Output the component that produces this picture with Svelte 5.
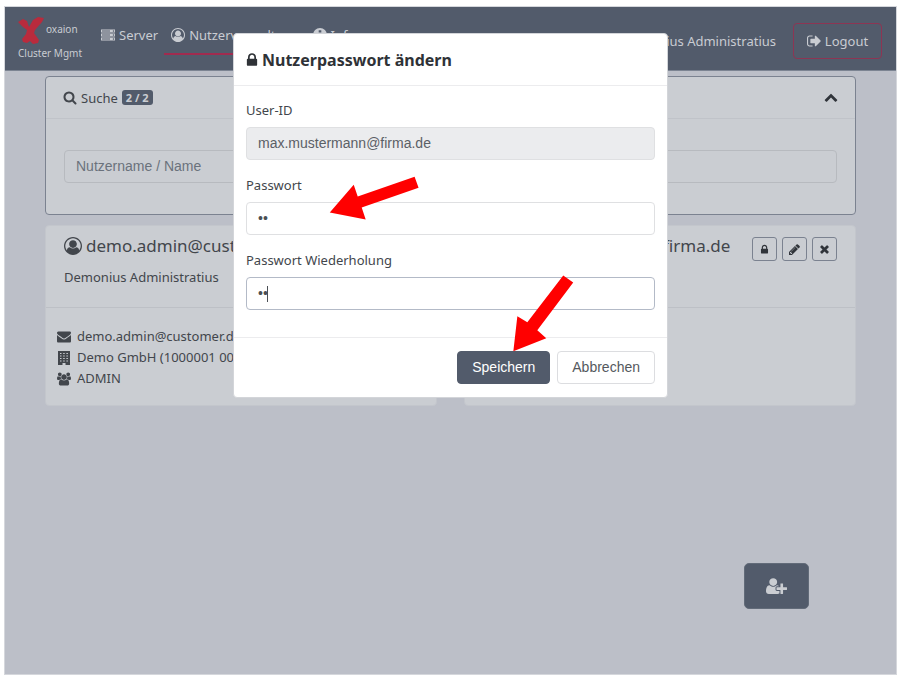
<script lang="ts">
	type Icon = { box: string; d: string };

	const icons: Record<string, Icon> = {
		lock: {
			box: '320 0 1152 1792',
			d: 'M640 768h512v-192q0-106-75-181t-181-75-181 75-75 181v192zm832 96v576q0 40-28 68t-68 28h-960q-40 0-68-28t-28-68v-576q0-40 28-68t68-28h32v-192q0-184 132-316t316-132 316 132 132 316v192h32q40 0 68 28t28 68z'
		},
		search: {
			box: '64 64 1664 1792',
			d: 'M1216 832q0-185-131.5-316.5t-316.5-131.5-316.5 131.5-131.5 316.5 131.5 316.5 316.5 131.5 316.5-131.5 131.5-316.5zm512 832q0 52-38 90t-90 38q-54 0-90-38l-343-342q-179 124-399 124-143 0-273.5-55.5t-225-150-150-225-55.5-273.5 55.5-273.5 150-225 225-150 273.5-55.5 273.5 55.5 225 150 150 225 55.5 273.5q0 220-124 399l343 343q37 37 37 90z'
		},
		user: {
			box: '0 0 1792 1792',
			d: 'M896 0q182 0 348 71t286 191 191 286 71 348q0 181-70.5 347t-190.5 286-286 191.5-349 71.5-349-71-285.5-191.5-190.5-286-71-347.5 71-348 191-286 286-191 348-71zm619 1351q149-205 149-455 0-156-61-298t-164-245-245-164-298-61-298 61-245 164-164 245-61 298q0 250 149 455 66-327 306-327 131 128 313 128t313-128q240 0 306 327zm-235-647q0-159-112.5-271.5t-271.5-112.5-271.5 112.5-112.5 271.5 112.5 271.5 271.5 112.5 271.5-112.5 112.5-271.5z'
		},
		server: {
			box: '0 0 1792 1664',
			d: 'M128 1408h1024v-128h-1024v128zm0-512h1024v-128h-1024v128zm1568 448q0-40-28-68t-68-28-68 28-28 68 28 68 68 28 68-28 28-68zm-1568-960h1024v-128h-1024v128zm1568 448q0-40-28-68t-68-28-68 28-28 68 28 68 68 28 68-28 28-68zm0-512q0-40-28-68t-68-28-68 28-28 68 28 68 68 28 68-28 28-68zm96 832v384h-1792v-384h1792zm0-512v384h-1792v-384h1792zm0-512v384h-1792v-384h1792z'
		},
		info: {
			box: '0 0 16 16',
			d: 'M8 0a8 8 0 1 1 0 16A8 8 0 0 1 8 0zM6.500 2.500v2.500h3V2.500zM5.500 6.500v1.500h1v4h-1v1.500h5V12h-1V6.500z'
		},
		signOut: {
			box: '64 128 1600 1536',
			d: 'M704 1440q0 4 1 20t.5 26.500-3 23.500-10 19.500-20.500 6.500h-320q-119 0-203.500-84.500t-84.500-203.500v-704q0-119 84.500-203.500t203.500-84.500h320q13 0 22.500 9.500t9.500 22.500q0 4 1 20t.5 26.500-3 23.500-10 19.500-20.500 6.500h-320q-66 0-113 47t-47 113v704q0 66 47 113t113 47h312l11.500 1 11.500 3 8 5.500 7 9 2 13.500zm928-544q0 26-19 45l-544 544q-19 19-45 19t-45-19-19-45v-288h-448q-26 0-45-19t-19-45v-384q0-26 19-45t45-19h448v-288q0-26 19-45t45-19 45 19l544 544q19 19 19 45z'
		},
		chevronUp: {
			box: '0 128 1792 1792',
			d: 'M1683 1331l-166 165q-19 19-45 19t-45-19l-531-531-531 531q-19 19-45 19t-45-19l-166-165q-19-19-19-45.500t19-45.500l742-741q19-19 45-19t45 19l742 741q19 19 19 45.500t-19 45.500z'
		},
		pencil: {
			box: '128 128 1536 1536',
			d: 'M491 1536l91-91-235-235-91 91v107h128v128h107zm523-928q0-22-22-22-10 0-17 7l-542 542q-7 7-7 17 0 22 22 22 10 0 17-7l542-542q7-7 7-17zm-54-192l416 416-832 832h-416v-416zm683 96q0 53-37 90l-166 166-416-416 166-165q36-38 90-38 53 0 91 38l235 234q37 39 37 91z'
		},
		times: {
			box: '192 192 1408 1536',
			d: 'M1490 1322q0 40-28 68l-136 136q-28 28-68 28t-68-28l-294-294-294 294q-28 28-68 28t-68-28l-136-136q-28-28-28-68t28-68l294-294-294-294q-28-28-28-68t28-68l136-136q28-28 68-28t68 28l294 294 294-294q28-28 68-28t68 28l136 136q28 28 28 68t-28 68l-294 294 294 294q28 28 28 68z'
		},
		envelope: {
			box: '0 128 1792 1664',
			d: 'M1792 710v794q0 66-47 113t-113 47h-1472q-66 0-113-47t-47-113v-794q44 49 101 87 362 246 497 345 57 42 92.500 65.500t94.500 48 110 24.500h2q51 0 110-24.500t94.500-48 92.500-65.500q170-123 498-345 57-39 100-87zm0-294q0 79-49 151t-122 123q-376 261-468 325-10 7-42.500 31t-54 38.500-52 32.500-57.500 27-50 9h-2q-23 0-50-9t-57.500-27-52-32.500-54-38.500-42.500-31q-91-64-262-182.500t-205-142.500q-62-42-117-115.500t-55-136.500q0-78 41.500-130t118.500-52h1472q65 0 112.500 47t47.500 113z'
		},
		building: {
			box: '0 0 14 14',
			d: 'M1 0h12v14H8.500v-2h-3v2H1zM3 2v1h1.500V2zm3.200 0v1h1.500V2zm3.200 0v1h1.500V2zM3 4.500v1h1.500v-1zm3.200 0v1h1.500v-1zm3.200 0v1h1.500v-1zM3 7v1h1.500V7zm3.200 0v1h1.500V7zm3.200 0v1h1.500V7zM3 9.500v1h1.500v-1zm3.200 0v1h1.500v-1zm3.200 0v1h1.500v-1z'
		},
		users: {
			box: '64 0 1920 1792',
			d: 'M657 896q-162 5-265 128h-134q-82 0-138-40.500t-56-118.500q0-353 124-353 6 0 43.500 21t97.500 42.500 119 21.500q67 0 133-23-5 37-5 66 0 139 81 256zm1071 637q0 120-73 189.500t-194 69.500h-874q-121 0-194-69.500t-73-189.500q0-53 3.500-103.500t14-109 26.500-108.500 43-97.500 62-81 85.500-53.500 111.500-20q10 0 43 21.500t73 48 107 48 135 21.500 135-21.500 107-48 73-48 43-21.500q61 0 111.500 20t85.500 53.500 62 81 43 97.500 26.500 108.500 14 109 3.500 103.500zm-1024-1277q0 106-75 181t-181 75-181-75-75-181 75-181 181-75 181 75 75 181zm704 384q0 159-112.500 271.500t-271.500 112.500-271.500-112.500-112.500-271.500 112.500-271.500 271.500-112.500 271.500 112.500 112.500 271.500zm576 225q0 78-56 118.500t-138 40.500h-134q-103-123-265-128 81-117 81-256 0-29-5-66 66 23 133 23 59 0 119-21.500t97.500-42.500 43.500-21q124 0 124 353zm-128-609q0 106-75 181t-181 75-181-75-75-181 75-181 181-75 181 75 75 181z'
		},
		userPlus: {
			box: '0 128 2048 1536',
			d: 'M704 896q-159 0-271.500-112.500t-112.500-271.500 112.500-271.500 271.500-112.500 271.500 112.500 112.500 271.500-112.500 271.500-271.500 112.500zm960 128h352q13 0 22.500 9.500t9.500 22.500v192q0 13-9.500 22.500t-22.500 9.500h-352v352q0 13-9.500 22.500t-22.500 9.500h-192q-13 0-22.500-9.500t-9.500-22.500v-352h-352q-13 0-22.500-9.500t-9.500-22.500v-192q0-13 9.500-22.500t22.500-9.500h352v-352q0-13 9.500-22.500t22.500-9.500h192q13 0 22.500 9.500t9.500 22.500v352zm-736 224q0 52 38 90t90 38h256v238q-68 50-171 50h-874q-121 0-194-69t-73-190q0-53 3.500-103.500t14-109 26.500-108.500 43-97.500 62-81 85.500-53.500 111.500-20q19 0 39 17 79 61 154.500 91.500t164.500 30.500 164.500-30.500 154.500-91.500q20-17 39-17 132 0 217 96h-223q-52 0-90 38t-38 90v192z'
		}
	};

	const users = [
		{
			login: 'demo.admin@customer.de',
			name: 'Demonius Administratius',
			details: [
				{ icon: 'envelope', text: 'demo.admin@customer.de' },
				{ icon: 'building', text: 'Demo GmbH (1000001 001)' },
				{ icon: 'users', text: 'ADMIN' }
			],
			editable: false
		},
		{ login: 'max.mustermann@firma.de', name: 'Max Mustermann', details: [], editable: true }
	];

	let filter = $state('');
	let searchOpen = $state(true);
	let dialogOpen = $state(true);
	let password = $state('••');
	let repeat = $state('••');

	function save(event: SubmitEvent) {
		event.preventDefault();
		if (password === repeat) dialogOpen = false;
	}
</script>

{#snippet icon(name: string)}
	<svg class="icon" viewBox={icons[name].box} aria-hidden="true">
		<path fill-rule="evenodd" d={icons[name].d} />
	</svg>
{/snippet}

<div class="app">
	<header class="navbar">
		<a class="brand" href="#home">
			<span class="brand-row">
				<svg class="logo" viewBox="0 0 26 28" aria-hidden="true">
					<path d="M0 5 5 2l4 2 2 6 4-7 5-3 6 1-2 4-7 8-1 3 5 7-1 3-5 1-3-3-3 2-4-1-1-3 4-5 1-4-4-3z" />
				</svg>
				oxaion
			</span>
			<span class="product">Cluster Mgmt</span>
		</a>
		<nav>
			<a href="#server">{@render icon('server')}Server</a>
			<a class="active" href="#users">{@render icon('user')}Nutzerverwaltung</a>
			<a href="#info">{@render icon('info')}Info</a>
		</nav>
		<span class="account">Demonius Administratius</span>
		<button class="logout" type="button">{@render icon('signOut')}Logout</button>
	</header>

	<main>
		<section class="card search">
			<div class="search-head">
				{@render icon('search')}
				<span>Suche</span>
				<span class="badge">2 / 2</span>
				<button class="toggle" type="button" aria-label="Suche einklappen" onclick={() => (searchOpen = !searchOpen)}>
					{@render icon('chevronUp')}
				</button>
			</div>
			{#if searchOpen}
				<div class="search-body">
					<input class="field" aria-label="Nutzername / Name" placeholder="Nutzername / Name" bind:value={filter} />
				</div>
			{/if}
		</section>

		<div class="users">
			{#each users as user}
				<article class="card">
					<div class="user-head">
						<h2>
							{@render icon('user')}
							<span>{user.login}</span>
						</h2>
						{#if user.editable}
							<div class="actions">
								<button type="button" aria-label="Passwort ändern" onclick={() => (dialogOpen = true)}>{@render icon('lock')}</button>
								<button type="button" aria-label="Bearbeiten">{@render icon('pencil')}</button>
								<button type="button" aria-label="Löschen">{@render icon('times')}</button>
							</div>
						{/if}
						<p>{user.name}</p>
					</div>
					<ul>
						{#each user.details as detail}
							<li>{@render icon(detail.icon)}{detail.text}</li>
						{/each}
					</ul>
				</article>
			{/each}
		</div>
	</main>

	<button class="add" type="button" aria-label="Nutzer anlegen">{@render icon('userPlus')}</button>

	{#if dialogOpen}
		<div class="overlay">
			<form class="dialog" role="dialog" aria-modal="true" aria-labelledby="dialog-title" onsubmit={save}>
				<h1 id="dialog-title">{@render icon('lock')}Nutzerpasswort ändern</h1>
				<div class="dialog-body">
					<label for="user-id">User-ID</label>
					<input class="field" id="user-id" value="max.mustermann@firma.de" readonly />
					<label for="password">Passwort</label>
					<input class="field" id="password" type="password" bind:value={password} />
					<label for="repeat">Passwort Wiederholung</label>
					<div class="focused">
						<input class="field" id="repeat" type="password" bind:value={repeat} />
						<span class="caret"></span>
					</div>
				</div>
				<footer>
					<button class="primary" type="submit">Speichern</button>
					<button type="button" onclick={() => (dialogOpen = false)}>Abbrechen</button>
				</footer>
				<svg class="arrows" viewBox="0 0 434 364" aria-hidden="true">
					<path d="M96 179l24-28 4 12 57-20 4 11-57 20 4 12z" />
					<path d="M280 318l4-35 10 6 36-47 10 7-36 48 9 8z" />
				</svg>
			</form>
		</div>
	{/if}
</div>

<style>
	:global(body) {
		background: #fff;
	}

	.app,
	.app * {
		box-sizing: border-box;
	}

	.app {
		position: relative;
		min-height: calc(100vh - 12px);
		margin: 6px 3px 6px 4px;
		border: 1px solid #d5d7dc;
		background: #bcbfc8;
		color: #42464c;
		font: 13px/20px 'Noto Sans', 'Open Sans', sans-serif;
	}

	button,
	input {
		font-family: 'Liberation Sans', Arial, sans-serif;
		font-size: 14px;
	}

	button {
		cursor: pointer;
	}

	.icon {
		width: 14px;
		height: 14px;
		flex: none;
		fill: currentColor;
	}

	.navbar {
		display: flex;
		align-items: center;
		height: 64px;
		padding: 4px 14px 0 13px;
		border-bottom: 1px solid #7c8492;
		background: #525b6b;
		color: #c9ccd2;
	}

	.brand {
		display: block;
		width: 76px;
		margin-bottom: 4px;
		color: inherit;
		font-size: 10px;
		line-height: 16px;
		text-decoration: none;
	}

	.brand-row {
		display: flex;
		gap: 2px;
		line-height: 24px;
	}

	.logo {
		width: 26px;
		height: 28px;
		fill: #b92b3d;
	}

	.product {
		display: block;
	}

	nav {
		display: flex;
		margin-bottom: 10px;
	}

	nav a {
		display: flex;
		align-items: center;
		gap: 4px;
		padding: 8px 6px 8px 7px;
		border-bottom: 2px solid transparent;
		color: inherit;
		text-decoration: none;
	}

	nav a.active {
		border-color: #a12b4f;
	}

	.account {
		margin-left: auto;
	}

	.logout {
		display: flex;
		align-items: center;
		justify-content: center;
		gap: 4px;
		width: 89px;
		height: 36px;
		margin-left: 17px;
		padding: 0;
		border: 1px solid #8d3553;
		border-radius: 4px;
		background: none;
		color: inherit;
		font: inherit;
	}

	main {
		padding: 5px 40px;
	}

	.card {
		min-width: 0;
		border: 1px solid #c3c6cc;
		border-radius: 4px;
		background: #cacdd2;
	}

	.search {
		border-color: #7b8290;
	}

	.search-head {
		display: flex;
		align-items: center;
		gap: 4px;
		height: 42px;
		padding: 0 17px;
		border-bottom: 1px solid #c0c3c9;
	}

	.badge {
		padding: 0 4px;
		border-radius: 3px;
		background: #525b6b;
		color: #cacdd2;
		font-size: 11px;
		font-weight: 700;
		line-height: 15px;
	}

	.toggle {
		display: flex;
		margin-left: auto;
		padding: 0;
		border: 0;
		background: none;
		color: #30343a;
	}

	.search-body {
		padding: 31px 18px;
	}

	.field {
		display: block;
		width: 100%;
		height: 33px;
		padding: 0 11px 2px;
		border: 1px solid #dfe0e2;
		border-radius: 4px;
		outline: none;
		background: #fff;
		color: #4b4f54;
	}

	.search .field {
		border-color: #b7babf;
		background: transparent;
	}

	.field::placeholder {
		color: #6a727c;
		opacity: 1;
	}

	.users {
		display: grid;
		grid-template-columns: 1fr 1fr;
		gap: 27px;
		margin-top: 10px;
	}

	.user-head {
		display: grid;
		grid-template-columns: 1fr auto;
		align-items: start;
		padding: 8px 18px 20px;
		border-bottom: 1px solid #bdc0c6;
	}

	h2 {
		display: flex;
		align-items: center;
		gap: 4px;
		min-width: 0;
		margin: 0 0 3px;
		font-size: 17px;
		font-weight: 400;
		line-height: 24px;
	}

	h2 .icon {
		width: 18px;
		height: 18px;
	}

	.user-head p {
		grid-column: 1 / -1;
		margin: 6px 0 0;
	}

	.actions {
		display: flex;
		gap: 5px;
		margin-top: 3px;
	}

	.actions button {
		display: grid;
		place-items: center;
		width: 25px;
		height: 24px;
		padding: 0;
		border: 1px solid #7b8290;
		border-radius: 3px;
		background: none;
		color: #30343a;
	}

	.actions .icon {
		width: 11px;
		height: 11px;
	}

	ul {
		min-height: 97px;
		margin: 0;
		padding: 18px 11px 16px;
		line-height: 21px;
		list-style: none;
	}

	li {
		display: flex;
		align-items: center;
		gap: 6px;
	}

	.add {
		position: absolute;
		right: 87px;
		bottom: 65px;
		display: grid;
		place-items: center;
		width: 65px;
		height: 46px;
		border: 1px solid #626b79;
		border-radius: 5px;
		background: #525b6b;
		color: #cacdd2;
	}

	.add .icon {
		width: 21px;
		height: 16px;
	}

	.overlay {
		position: absolute;
		inset: 0;
		display: flex;
		align-items: flex-start;
		justify-content: center;
		padding: 26px 12px;
	}

	.dialog {
		position: relative;
		width: 100%;
		max-width: 435px;
		border: 1px solid #d3d5d9;
		border-radius: 4px;
		background: #fff;
	}

	h1 {
		display: flex;
		align-items: center;
		gap: 4px;
		margin: 0;
		padding: 14px 12px 13px;
		border-bottom: 1px solid #ececee;
		color: #2f3237;
		font-size: 16px;
		font-weight: 700;
		line-height: 24px;
	}

	h1 .icon {
		width: 12px;
		height: 16px;
	}

	.dialog-body {
		padding: 14px 12px 27px;
	}

	label {
		display: block;
		margin-bottom: 7px;
	}

	.dialog-body .field + label {
		margin-top: 15px;
	}

	.field[readonly] {
		background: #ebecee;
		color: #5b6066;
	}

	.focused {
		position: relative;
	}

	.focused .field {
		border-color: #b3bac7;
	}

	.caret {
		position: absolute;
		top: 9px;
		left: 21px;
		width: 1px;
		height: 16px;
		background: #4b4f54;
	}

	footer {
		display: flex;
		justify-content: flex-end;
		gap: 7px;
		padding: 13px 12px;
		border-top: 1px solid #ececee;
	}

	footer button {
		height: 33px;
		padding: 0 14px 2px;
		border: 1px solid #dcdde0;
		border-radius: 4px;
		background: #fff;
		color: #55595e;
	}

	footer .primary {
		border-color: #525b6b;
		background: #525b6b;
		color: #fff;
	}

	.arrows {
		position: absolute;
		top: 0;
		left: 0;
		width: 100%;
		fill: #f00;
		pointer-events: none;
	}
</style>
